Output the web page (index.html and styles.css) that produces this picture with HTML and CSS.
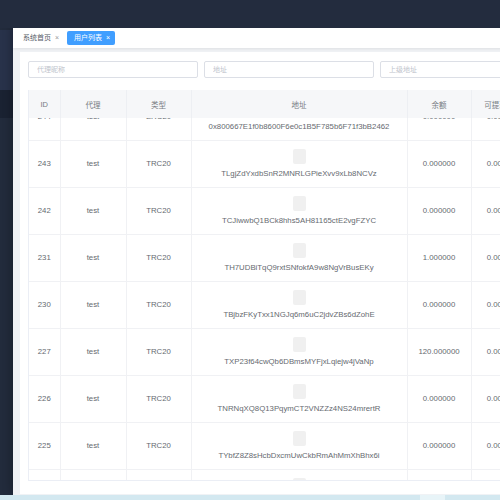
FILE: index.html
```html
<!DOCTYPE html>
<html lang="zh-CN">
<head>
  <meta charset="UTF-8">
  <title>用户列表</title>
  <link rel="stylesheet" href="styles.css">
</head>
<body>
  <div class="topbar"></div>
  <div class="layout">
    <div class="sidebar">
      <div class="menu-item"></div>
      <div class="menu-item active"></div>
    </div>
    <div class="main">
      <div class="tabs">
        <span class="tab">系统首页 <i>×</i></span>
        <span class="tab current">用户列表 <i>×</i></span>
      </div>
      <div class="page">
        <div class="panel">
          <div class="filters">
            <input class="field" placeholder="代理昵称">
            <input class="field" placeholder="地址">
            <input class="field" placeholder="上级地址">
          </div>
          <div class="grid">
            <table class="grid-head">
              <colgroup><col class="c-id"><col class="c-agent"><col class="c-type"><col class="c-addr"><col class="c-bal"><col class="c-bal"><col class="c-rest"></colgroup>
              <tr><th>ID</th><th>代理</th><th>类型</th><th>地址</th><th>余额</th><th>可提现余额</th><th>操作</th></tr>
            </table>
            <div class="grid-body" id="gridBody">
              <table>
                <colgroup><col class="c-id"><col class="c-agent"><col class="c-type"><col class="c-addr"><col class="c-bal"><col class="c-bal"><col class="c-rest"></colgroup>
                <tbody id="rows"></tbody>
              </table>
            </div>
          </div>
        </div>
      </div>
    </div>
  </div>
  <div class="footer-strip"><span class="footer-btn"></span></div>
  <script>
    const users = [
      [244, 'ERC20', '0x800667E1f0b8600F6e0c1B5F785b6F71f3bB2462', '0.000000'],
      [243, 'TRC20', 'TLgjZdYxdbSnR2MNRLGPieXvv9xLb8NCVz', '0.000000'],
      [242, 'TRC20', 'TCJiwwbQ1BCk8hhs5AH81165ctE2vgFZYC', '0.000000'],
      [231, 'TRC20', 'TH7UDBiTqQ9rxtSNfokfA9w8NgVrBusEKy', '1.000000'],
      [230, 'TRC20', 'TBjbzFKyTxx1NGJq6m6uC2jdvZBs6dZohE', '0.000000'],
      [227, 'TRC20', 'TXP23f64cwQb6DBmsMYFjxLqiejw4jVaNp', '120.000000'],
      [226, 'TRC20', 'TNRNqXQ8Q13PqymCT2VNZZz4NS24mrertR', '0.000000'],
      [225, 'TRC20', 'TYbfZ8Z8sHcbDxcmUwCkbRmAhMmXhBhx6i', '0.000000'],
      [224, 'TRC20', 'TQ5mZr8kLwP3vA7xNcYbE2dFgH4jK6sTuV', '0.000000']
    ];
    let html = '';
    users.forEach(u => {
      html += `<tr><td>${u[0]}</td><td>test</td><td>${u[1]}</td><td><div class="thumb"></div><div class="addr">${u[2]}</div></td><td>${u[3]}</td><td>0.000000</td><td></td></tr>`;
    });
    document.getElementById('rows').innerHTML = html;
    // body is scrolled a little, header stays fixed
    document.getElementById('gridBody').scrollTop = 24;
  </script>
</body>
</html>
```

FILE: styles.css
```css
body {
  margin: 0;
  width: 500px;
  height: 500px;
  overflow: hidden;
  background: #d3e8f0;
  font-family: 'Liberation Sans', 'Noto Sans CJK SC', sans-serif;
}
.topbar {
  height: 28px;
  background: #232c3e;
}
.layout {
  display: flex;
  height: 467px;
  overflow: hidden;
}
.sidebar {
  width: 13px;
  flex: none;
  background: #222b3c;
  padding-top: 2px;
}
.menu-item {
  height: 60px;
  background: #28324a;
}
.menu-item.active {
  height: 28px;
  background: #1a2232;
}
.main {
  width: 640px;
  flex: none;
  min-height: 0;
  display: flex;
  flex-direction: column;
  background: #f0f2f5;
  box-shadow: -2px -2px 8px rgba(0,0,0,0.25);
}
.tabs {
  flex: none;
  height: 20px;
  background: #fff;
  display: flex;
  align-items: center;
  gap: 7px;
  padding-left: 9px;
  box-shadow: 0 1px 3px rgba(0,0,0,0.08);
}
.tab {
  font-size: 7px;
  color: #555b66;
  padding: 0 1px;
  height: 14px;
  line-height: 14px;
}
.tab i {
  font-style: normal;
  color: #999;
  margin-left: 2px;
}
.tab.current {
  background: #409eff;
  color: #fff;
  padding: 0 5px 0 7px;
  border-radius: 2px;
}
.tab.current i {
  color: #fff;
}
.page {
  flex: 1;
  min-height: 0;
  padding: 4px 0 1px 7px;
  display: flex;
}
.panel {
  flex: 1;
  min-height: 0;
  background: #fff;
  padding: 9px 8px 13px 8px;
  display: flex;
  flex-direction: column;
}
.filters {
  flex: none;
  display: flex;
  gap: 6px;
  margin-bottom: 12px;
}
.field {
  width: 170px;
  height: 17px;
  box-sizing: border-box;
  border: 1px solid #dcdfe6;
  border-radius: 2px;
  padding: 0 8px;
  font-family: inherit;
  font-size: 7px;
  outline: none;
}
.field::placeholder {
  color: #c0c4cc;
}
.grid {
  flex: 1;
  min-height: 0;
  display: flex;
  flex-direction: column;
  border-left: 1px solid #ebeef5;
  border-bottom: 1px solid #ebeef5;
  width: 600px;
}
.grid table {
  width: 600px;
  table-layout: fixed;
  border-collapse: collapse;
}
.c-id { width: 31px; }
.c-agent { width: 66px; }
.c-type { width: 65px; }
.c-addr { width: 216px; }
.c-bal { width: 64px; }
.c-rest { width: 158px; }
.grid-head {
  flex: none;
}
.grid-head th {
  height: 28px;
  background: #f6f7f9;
  color: #777b82;
  font-size: 7.5px;
  font-weight: normal;
  border-right: 1px solid #edeff3;
  padding: 0;
  white-space: nowrap;
  overflow: hidden;
}
.grid-body {
  flex: 1;
  min-height: 0;
  overflow: hidden;
}
.grid-body td {
  height: 46px;
  text-align: center;
  vertical-align: middle;
  color: #666a70;
  font-size: 7.8px;
  line-height: 10px;
  border-right: 1px solid #f0f1f4;
  border-bottom: 1px solid #f0f1f4;
  padding: 0;
  white-space: nowrap;
  overflow: hidden;
}
.thumb {
  width: 13px;
  height: 15px;
  margin: 0 auto 5px;
  background: #f0f0f0;
  border-radius: 2px;
}
.footer-strip {
  height: 5px;
  background: #d3e8f0;
  display: flex;
  padding-left: 420px;
}
.footer-btn {
  width: 25px;
  background: #e8f4f8;
}
```
